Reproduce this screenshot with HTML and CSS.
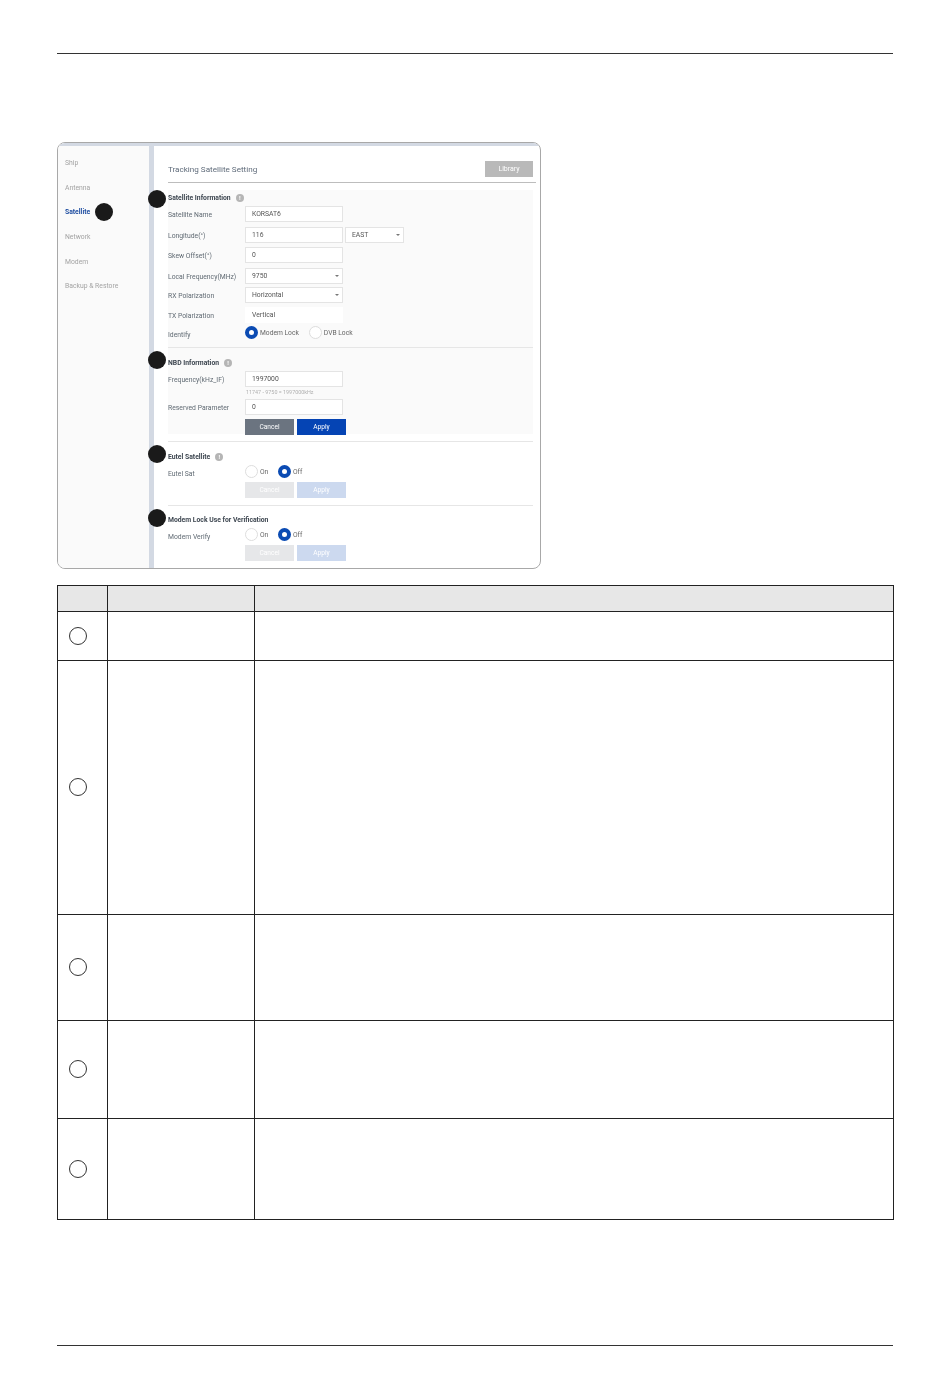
FILE: index.html
```html
<!DOCTYPE html>
<html>
<head>
	<meta charset="utf-8">
	<title>Tracking Satellite Setting</title>
	<link rel="stylesheet" href="styles.css">
</head>
<body>
<div class="page">
	<div class="rule"></div>

	<!-- screenshot of the web console -->
	<div class="panel">
		<div class="side">
			<div class="nav">Ship</div>
			<div class="nav">Antenna</div>
			<div class="nav nav-on">Satellite<span class="dot dot-nav"></span></div>
			<div class="nav">Network</div>
			<div class="nav">Modem</div>
			<div class="nav">Backup &amp; Restore</div>
		</div>
		<div class="main">
			<div class="head">
				<div class="head-title">Tracking Satellite Setting</div>
				<div class="btn-lib">Library</div>
			</div>

			<div class="grey">
				<div class="sec sec-first">
					<span class="dot dot-sec"></span>
					<div class="sec-title">Satellite Information<span class="info">!</span></div>
					<div class="row row-21"><div class="lab">Satellite Name</div><div class="field">KORSAT6</div></div>
					<div class="row"><div class="lab">Longitude(°)</div><div class="field">116</div><div class="field field-small sel">EAST</div></div>
					<div class="row row-21"><div class="lab">Skew Offset(°)</div><div class="field">0</div></div>
					<div class="row row-19"><div class="lab">Local Frequency(MHz)</div><div class="field sel">9750</div></div>
					<div class="row"><div class="lab">RX Polarization</div><div class="field sel">Horizontal</div></div>
					<div class="row"><div class="lab">TX Polarization</div><div class="field field-plain">Vertical</div></div>
					<div class="row row-identify">
						<div class="lab lab-low">Identify</div>
						<span class="radio radio-on"></span><span class="radio-text">Modem Lock</span>
						<span class="radio radio-gap"></span><span class="radio-text">DVB Lock</span>
					</div>
				</div>
				<div class="sec sec-nbd">
					<span class="dot dot-sec"></span>
					<div class="sec-title">NBD Information<span class="info">!</span></div>
					<div class="row row-21"><div class="lab">Frequency(kHz_IF)</div><div class="field">1997000</div></div>
					<div class="hint">11747 - 9750 = 1997000kHz</div>
					<div class="row row-21"><div class="lab">Reserved Parameter</div><div class="field">0</div></div>
					<div class="btns">
						<div class="btn btn-cancel">Cancel</div>
						<div class="btn btn-apply">Apply</div>
					</div>
				</div>
			</div>

			<div class="sec sec-eutel">
				<span class="dot dot-sec"></span>
				<div class="sec-title">Eutel Satellite<span class="info">!</span></div>
				<div class="row row-radio">
					<div class="lab lab-low">Eutel Sat</div>
					<span class="radio"></span><span class="radio-text radio-text-on">On</span>
					<span class="radio radio-on"></span><span class="radio-text">Off</span>
				</div>
				<div class="btns btns-off">
					<div class="btn btn-cancel-off">Cancel</div>
					<div class="btn btn-apply-off">Apply</div>
				</div>
			</div>

			<div class="sec sec-last">
				<span class="dot dot-sec"></span>
				<div class="sec-title">Modem Lock Use for Verification</div>
				<div class="row row-radio">
					<div class="lab lab-low">Modem Verify</div>
					<span class="radio"></span><span class="radio-text radio-text-on">On</span>
					<span class="radio radio-on"></span><span class="radio-text">Off</span>
				</div>
				<div class="btns btns-off">
					<div class="btn btn-cancel-off">Cancel</div>
					<div class="btn btn-apply-off">Apply</div>
				</div>
			</div>
		</div>
	</div>

	<!-- description table, cells are empty in the original -->
	<table class="desc">
		<tr class="tr-head"><th class="c1"></th><th class="c2"></th><th></th></tr>
		<tr class="tr-1"><td><span class="num"></span></td><td></td><td></td></tr>
		<tr class="tr-2"><td><span class="num"></span></td><td></td><td></td></tr>
		<tr class="tr-3"><td><span class="num"></span></td><td></td><td></td></tr>
		<tr class="tr-4"><td><span class="num"></span></td><td></td><td></td></tr>
		<tr class="tr-5"><td><span class="num"></span></td><td></td><td></td></tr>
	</table>

	<div class="rule rule-bottom"></div>
</div>
</body>
</html>
```

FILE: styles.css
```css
* {
	box-sizing: border-box;
}
body {
	margin: 0;
	background: #ffffff;
	font-family: Roboto, "Liberation Sans", sans-serif;
	color: #5a5a5a;
}
.page {
	width: 950px;
	height: 1378px;
	padding: 53px 57px 0 57px;
}
.rule {
	width: 836px;
	height: 1px;
	background: #333333;
}
.rule-bottom {
	margin-top: 125px;
}

/* panel, blurred a little because the original is a scaled shot */
.panel {
	display: flex;
	width: 484px;
	height: 427px;
	margin-top: 88px;
	border: 1px solid #a8a8a8;
	border-radius: 8px;
	overflow: hidden;
	filter: blur(0.3px);
}
.side {
	width: 91px;
	padding: 12px 0 0 7px;
	background: #fafafa;
	border-top: 3px solid #d3d9e3;
}
.nav {
	position: relative;
	height: 24.7px;
	font-size: 6.8px;
	line-height: 10px;
	color: #a3a3a3;
}
.nav-on {
	color: #1f4ea1;
	font-weight: 700;
}
.main {
	flex: 1;
	padding: 0 7px 0 14px;
	border-top: 3px solid #d3d9e3;
	border-left: 5px solid #d3d9e3;
}

/* black dots lying over the shot */
.dot {
	position: absolute;
	width: 18px;
	height: 18px;
	border-radius: 50%;
	background: #1a1a1a;
}
.dot-nav {
	left: 30px;
	top: -4px;
}
.dot-sec {
	left: -20px;
	top: 3px;
}

.head {
	display: flex;
	justify-content: space-between;
	height: 37px;
	padding-top: 15px;
	margin-right: -3px;
	border-bottom: 1px solid #bdbdbd;
}
.head-title {
	font-size: 8.1px;
	line-height: 12px;
	margin-top: 2px;
	color: #5f6b7a;
}
.btn-lib {
	width: 48px;
	height: 16px;
	margin-right: 3px;
	background: #b9b9b9;
	color: #ffffff;
	font-size: 7px;
	line-height: 16px;
	text-align: center;
}
.grey {
	margin-top: 7px;
	height: 244px;
	background: #fafafa;
}
.sec {
	position: relative;
}
.sec-title {
	height: 15px;
	font-size: 6.8px;
	line-height: 14px;
	font-weight: 700;
	color: #3d4650;
}
.sec-first {
	height: 158px;
	padding-top: 1px;
	border-bottom: 1px solid #e6e6e6;
}
.sec-nbd {
	padding-top: 8px;
}
.sec-eutel {
	height: 65px;
	margin-top: 7px;
	padding-top: 8px;
	border-top: 1px solid #e6e6e6;
	border-bottom: 1px solid #e6e6e6;
}
.sec-last {
	padding-top: 7px;
}
.sec-first .dot-sec {
	top: 0;
}
.info {
	display: inline-block;
	width: 8px;
	height: 8px;
	margin-left: 5px;
	border-radius: 50%;
	background: #b5b5b5;
	color: #ffffff;
	font-size: 6px;
	line-height: 8px;
	text-align: center;
	vertical-align: 0;
}

/* form rows */
.row {
	display: flex;
	align-items: flex-start;
	height: 20px;
}
.row-21 {
	height: 21px;
}
.row-19 {
	height: 19px;
}
.row-identify {
	height: 22px;
	margin-top: -1px;
}
.row-radio {
	height: 16px;
}
.lab {
	width: 77px;
	padding-top: 4px;
	font-size: 6.8px;
	line-height: 10px;
	color: #606a73;
	white-space: nowrap;
}
.lab-low {
	padding-top: 4px;
}
.field {
	position: relative;
	width: 98px;
	height: 16px;
	padding-left: 6px;
	background: #ffffff;
	border: 1px solid #e4e4e4;
	font-size: 6.8px;
	line-height: 15px;
	color: #555555;
}
.field-small {
	width: 59px;
	margin-left: 2px;
}
.field-plain {
	border-color: #ffffff;
}
.sel::after {
	content: "";
	position: absolute;
	right: 3px;
	top: 6px;
	border-top: 2px solid #777777;
	border-left: 2px solid transparent;
	border-right: 2px solid transparent;
}
.hint {
	height: 11px;
	margin: -4px 0 0 78px;
	font-size: 5.4px;
	line-height: 8px;
	color: #b0b0b0;
}
.radio {
	display: inline-block;
	width: 13px;
	height: 13px;
	border-radius: 50%;
	background: #ffffff;
	border: 1px solid #dddddd;
}
.radio-on {
	background: #ffffff;
	border: 4px solid #0b4bb3;
}
.radio-gap {
	margin-left: 10px;
}
.radio-text {
	padding: 2px 0 0 2px;
	font-size: 6.7px;
	line-height: 10px;
	color: #666666;
}
.radio-text-on {
	width: 20px;
}

/* buttons */
.btns {
	display: flex;
	gap: 3px;
	margin: -1px 0 0 77px;
}
.btns-off {
	margin-top: 1px;
}
.btn {
	width: 49px;
	height: 16px;
	font-size: 6.6px;
	line-height: 17px;
	text-align: center;
	color: #ffffff;
}
.btn-cancel {
	background: #6b7480;
}
.btn-apply {
	background: #0544b4;
}
.btn-cancel-off {
	background: #e6e7e9;
}
.btn-apply-off {
	background: #ccd9ef;
}

/* table */
.desc {
	width: 837px;
	margin-top: 16px;
	border-collapse: collapse;
	table-layout: fixed;
}
.desc th,
.desc td {
	padding: 0;
	border: 1px solid #222222;
	text-align: center;
	vertical-align: middle;
}
.desc th {
	background: #e7e7e7;
}
.c1 {
	width: 50px;
}
.c2 {
	width: 147px;
}
.tr-head {
	height: 26px;
}
.tr-1 {
	height: 49px;
}
.tr-2 {
	height: 254px;
}
.tr-3 {
	height: 106px;
}
.tr-4 {
	height: 98px;
}
.tr-5 {
	height: 101px;
}
.num {
	display: block;
	width: 18px;
	height: 18px;
	margin: -1px 0 0 11px;
	border: 1px solid #333333;
	border-radius: 50%;
}
```
